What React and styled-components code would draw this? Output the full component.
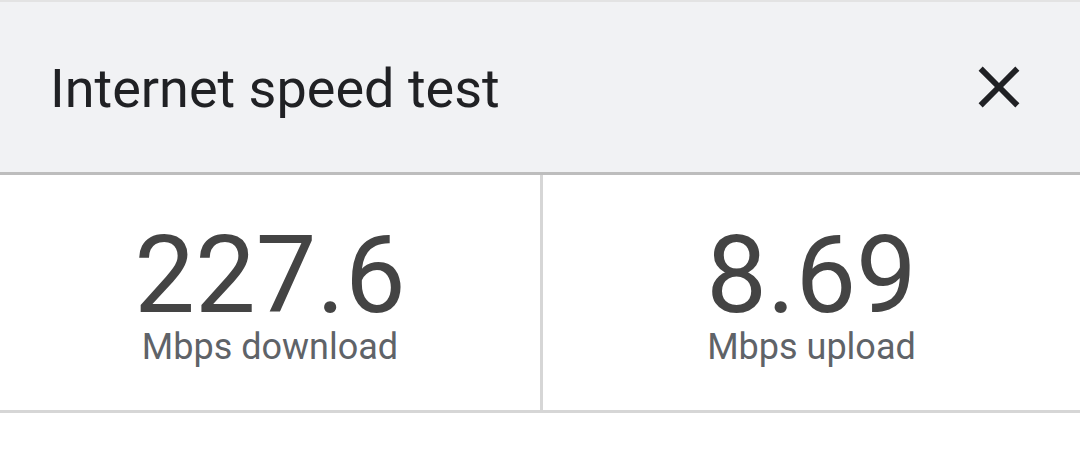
import React from "react";
import styled, { createGlobalStyle } from "styled-components";

const Global = createGlobalStyle`
  html, body { margin: 0; padding: 0; background: #ffffff; }
  body { font-family: Roboto, "Noto Sans", Arial, sans-serif; }
`;

const Page = styled.div`
  width: 1080px;
  height: 450px;
  background: #ffffff;
  border-top: 2px solid #e3e3e3;
  box-sizing: border-box;
`;

const Header = styled.header`
  height: 170px;
  background: #f1f2f4;
  border-bottom: 3px solid #bdbdbd;
  display: flex;
  align-items: center;
  justify-content: space-between;
  padding: 0 46px 0 50px;
`;

const Title = styled.h1`
  margin: 0;
  padding-top: 3px;
  font-family: Roboto, sans-serif;
  font-weight: 400;
  font-size: 54px;
  line-height: 1;
  color: #202124;
`;

const CloseButton = styled.button`
  border: 0;
  background: transparent;
  padding: 0;
  width: 70px;
  height: 70px;
  display: flex;
  align-items: center;
  justify-content: center;
  color: #202124;
`;

const Stats = styled.div`
  display: grid;
  grid-template-columns: 1fr 1fr;
  height: 235px;
  border-bottom: 3px solid #d6d6d6;
`;

const Cell = styled.div`
  display: flex;
  flex-direction: column;
  align-items: center;
  justify-content: center;
  border-left: ${(p) => (p.$divider ? "3px solid #d6d6d6" : "none")};
`;

const Value = styled.div`
  font-family: Roboto, sans-serif;
  font-size: 108px;
  font-weight: 400;
  line-height: 1;
  color: #444444;
`;

const Label = styled.div`
  font-family: Roboto, sans-serif;
  font-size: 36px;
  line-height: 1;
  color: #5f6368;
`;

const CloseIcon = () => (
  <svg width="70" height="70" viewBox="0 0 24 24" fill="currentColor">
    <path d="M19 6.41 17.59 5 12 10.59 6.41 5 5 6.41 10.59 12 5 17.59 6.41 19 12 13.41 17.59 19 19 17.59 13.41 12z" />
  </svg>
);

export default function App() {
  return (
    <>
      <Global />
      <Page>
        <Header>
          <Title>Internet speed test</Title>
          <CloseButton aria-label="Close">
            <CloseIcon />
          </CloseButton>
        </Header>
        <Stats>
          <Cell>
            <Value>227.6</Value>
            <Label>Mbps download</Label>
          </Cell>
          <Cell $divider>
            <Value>8.69</Value>
            <Label>Mbps upload</Label>
          </Cell>
        </Stats>
      </Page>
    </>
  );
}
